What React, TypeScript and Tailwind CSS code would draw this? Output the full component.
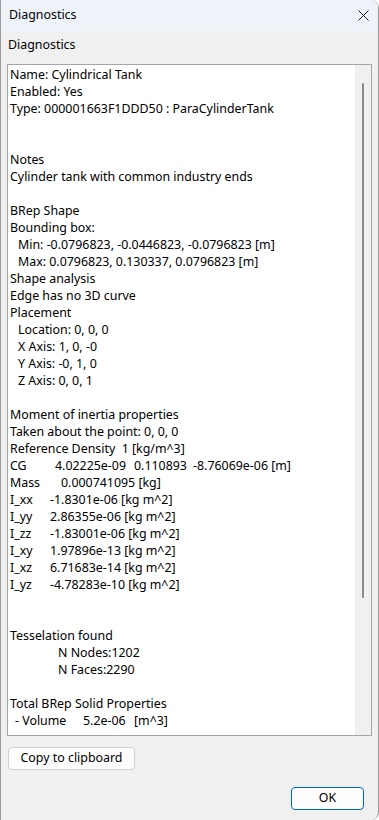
import { useState } from "react";

type Seg = { text: string; x?: number };

// each line of the diagnostics report; x is left offset in px inside the text box
const lines: Seg[][] = [
  [{ text: "Name: Cylindrical Tank" }],
  [{ text: "Enabled: Yes" }],
  [{ text: "Type: 000001663F1DDD50 : ParaCylinderTank" }],
  [],
  [],
  [{ text: "Notes" }],
  [{ text: "Cylinder tank with common industry ends" }],
  [],
  [{ text: "BRep Shape" }],
  [{ text: "Bounding box:" }],
  [{ text: "Min: -0.0796823, -0.0446823, -0.0796823 [m]", x: 8 }],
  [{ text: "Max: 0.0796823, 0.130337, 0.0796823 [m]", x: 8 }],
  [{ text: "Shape analysis" }],
  [{ text: "Edge has no 3D curve" }],
  [{ text: "Placement" }],
  [{ text: "Location: 0, 0, 0", x: 8 }],
  [{ text: "X Axis: 1, 0, -0", x: 8 }],
  [{ text: "Y Axis: -0, 1, 0", x: 8 }],
  [{ text: "Z Axis: 0, 0, 1", x: 8 }],
  [],
  [{ text: "Moment of inertia properties" }],
  [{ text: "Taken about the point: 0, 0, 0" }],
  [{ text: "Reference Density  1 [kg/m^3]" }],
  [
    { text: "CG" },
    { text: "4.02225e-09", x: 45 },
    { text: "0.110893", x: 124 },
    { text: "-8.76069e-06 [m]", x: 183 },
  ],
  [{ text: "Mass" }, { text: "0.000741095 [kg]", x: 51 }],
  [{ text: "I_xx" }, { text: "-1.8301e-06 [kg m^2]", x: 40 }],
  [{ text: "I_yy" }, { text: "2.86355e-06 [kg m^2]", x: 40 }],
  [{ text: "I_zz" }, { text: "-1.83001e-06 [kg m^2]", x: 40 }],
  [{ text: "I_xy" }, { text: "1.97896e-13 [kg m^2]", x: 40 }],
  [{ text: "I_xz" }, { text: "6.71683e-14 [kg m^2]", x: 40 }],
  [{ text: "I_yz" }, { text: "-4.78283e-10 [kg m^2]", x: 40 }],
  [],
  [],
  [{ text: "Tesselation found" }],
  [{ text: "N Nodes:1202", x: 48 }],
  [{ text: "N Faces:2290", x: 48 }],
  [],
  [{ text: "Total BRep Solid Properties" }],
  [
    { text: "- Volume", x: 5 },
    { text: "5.2e-06", x: 73 },
    { text: "[m^3]", x: 124 },
  ],
];

const ReportLine = ({ segs }: { segs: Seg[] }) => (
  <div className="relative h-[17px] whitespace-pre leading-[17px]">
    {segs.map((s, i) =>
      i === 0 ? (
        <span key={i} style={{ marginLeft: s.x ?? 0 }}>
          {s.text}
        </span>
      ) : (
        <span key={i} className="absolute top-0" style={{ left: s.x }}>
          {s.text}
        </span>
      )
    )}
  </div>
);

const CloseIcon = () => (
  <svg width="11" height="11" viewBox="0 0 11 11" fill="none">
    <path d="M0.5 0.5 L10.5 10.5 M10.5 0.5 L0.5 10.5" stroke="#1a1a1a" strokeWidth="1" />
  </svg>
);

const App = () => {
  const [copied, setCopied] = useState(false);

  return (
    <div className="w-[379px] h-[820px] bg-[#f0f0f0] border-l border-r border-[#9c9c9c] rounded-tr-[8px] rounded-br-[8px] overflow-hidden flex flex-col text-[12.4px] text-black font-['Noto_Sans',sans-serif]">
      {/* title bar */}
      <div className="h-[31px] shrink-0 bg-[#eef3fa] flex items-center justify-between pl-[8px] pr-[9px]">
        <span>Diagnostics</span>
        <CloseIcon />
      </div>

      <div className="flex flex-col flex-1 px-[6px]">
        <div className="h-[33px] flex items-center pl-[1px] pb-[4px]">Diagnostics</div>

        {/* report box */}
        <div className="h-[672px] border border-[#a5a5a5] bg-white flex">
          <div className="flex-1 pl-[2px] pt-[1px] overflow-hidden">
            {lines.map((segs, i) => (
              <ReportLine key={i} segs={segs} />
            ))}
          </div>
          <div className="w-[16px] bg-[#f0f0f0] relative">
            <div className="absolute left-[7px] top-[18px] w-[2px] h-[515px] bg-[#8a8a8a] rounded-full" />
          </div>
        </div>

        <div className="mt-[11px] pl-[1px]">
          <button
            onClick={() => setCopied(!copied)}
            className="w-[127px] h-[23px] bg-[#fdfdfd] border border-[#d0d0d0] rounded-[4px] flex items-center justify-center"
          >
            Copy to clipboard
          </button>
        </div>

        <div className="mt-[17px] flex justify-end pr-[8px]">
          <button className="w-[73px] h-[23px] bg-[#fdfdfd] border-[1.5px] border-[#0067c0] rounded-[4px] flex items-center justify-center">
            OK
          </button>
        </div>
      </div>
    </div>
  );
};

export default App;
